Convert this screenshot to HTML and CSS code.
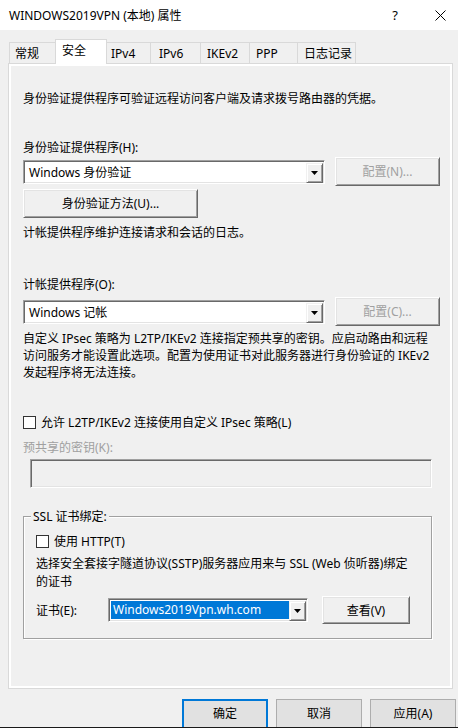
FILE: index.html
```html
<!DOCTYPE html>
<html lang="zh-CN">
<head>
<meta charset="utf-8">
<title>WINDOWS2019VPN (本地) 属性</title>
<link rel="stylesheet" href="styles.css">
</head>
<body>
<div class="titlebar">
  <span class="title">WINDOWS2019VPN (本地) 属性</span>
  <span class="help">?</span>
  <svg class="close" width="11" height="11" viewBox="0 0 11 11"><path d="M0.5 0.5L10.5 10.5M10.5 0.5L0.5 10.5" stroke="#000" stroke-width="1" fill="none"/></svg>
</div>
<div class="tabs">
  <div class="tab">常规</div>
  <div class="tab active">安全</div>
  <div class="tab">IPv4</div>
  <div class="tab">IPv6</div>
  <div class="tab">IKEv2</div>
  <div class="tab">PPP</div>
  <div class="tab">日志记录</div>
</div>
<div class="panel">
  <p class="intro">身份验证提供程序可验证远程访问客户端及请求拨号路由器的凭据。</p>
  <div class="label label-h">身份验证提供程序(H):</div>
  <div class="row row-h">
    <div class="combo combo-wide">
      <span class="combo-text">Windows 身份验证</span>
      <span class="combo-btn"><svg width="7" height="4" viewBox="0 0 7 4"><path d="M0 0H7L3.5 4Z" fill="#000"/></svg></span>
    </div>
    <div class="btn3d btn-config disabled">配置(N)...</div>
  </div>
  <div class="btn3d btn-method">身份验证方法(U)...</div>
  <p class="note">计帐提供程序维护连接请求和会话的日志。</p>
  <div class="label label-o">计帐提供程序(O):</div>
  <div class="row row-o">
    <div class="combo combo-wide">
      <span class="combo-text">Windows 记帐</span>
      <span class="combo-btn"><svg width="7" height="4" viewBox="0 0 7 4"><path d="M0 0H7L3.5 4Z" fill="#000"/></svg></span>
    </div>
    <div class="btn3d btn-config disabled">配置(C)...</div>
  </div>
  <p class="para">自定义 IPsec 策略为 L2TP/IKEv2 连接指定预共享的密钥。应启动路由和远程访问服务才能设置此选项。配置为使用证书对此服务器进行身份验证的 IKEv2 发起程序将无法连接。</p>
  <div class="check-row check-ipsec"><span class="cb"></span>允许 L2TP/IKEv2 连接使用自定义 IPsec 策略(L)</div>
  <div class="disabled-label">预共享的密钥(K):</div>
  <div class="textbox"></div>
  <div class="group">
    <div class="group-title">SSL 证书绑定:</div>
    <div class="check-row check-http"><span class="cb"></span>使用 HTTP(T)</div>
    <p class="group-text">选择安全套接字隧道协议(SSTP)服务器应用来与 SSL (Web 侦听器)绑定的证书</p>
    <div class="cert-row">
      <span class="cert-label">证书(E):</span>
      <div class="combo combo-cert">
        <span class="combo-text selected">Windows2019Vpn.wh.com</span>
        <span class="combo-btn"><svg width="7" height="4" viewBox="0 0 7 4"><path d="M0 0H7L3.5 4Z" fill="#000"/></svg></span>
      </div>
      <div class="btn3d btn-view">查看(V)</div>
    </div>
  </div>
</div>
<div class="footer">
  <div class="dlg-btn default">确定</div>
  <div class="dlg-btn">取消</div>
  <div class="dlg-btn">应用(A)</div>
</div>
</body>
</html>
```
FILE: styles.css
```css
* { box-sizing: border-box; }
html, body { margin: 0; padding: 0; }
body {
  width: 458px;
  height: 728px;
  overflow: hidden;
  background: #f0f0f0;
  font-family: "Noto Sans", "Noto Sans CJK SC", sans-serif;
  font-size: 12px;
  line-height: 17px;
  color: #000;
}
p { margin: 0; }

/* title bar */
.titlebar {
  height: 30px;
  background: #fff;
  display: flex;
  align-items: center;
  padding-left: 9px;
}
.title { flex: 1; white-space: nowrap; }
.help { font-size: 13px; margin-right: 37px; }
.close { display: block; margin-right: 12px; }

/* tabs */
.tabs {
  display: flex;
  align-items: flex-end;
  height: 33px;
  padding: 9px 0 0 9px;
}
.tab {
  height: 21px;
  border: 1px solid #d9d9d9;
  border-bottom: 0;
  background: #f0f0f0;
  margin-left: -1px;
  display: flex;
  align-items: center;
  white-space: nowrap;
}
.tab:nth-child(1) { margin-left: 0; width: 47px; padding-left: 5px; }
.tab:nth-child(2) { width: 52px; padding-left: 6px; }
.tab:nth-child(3) { width: 45px; padding-left: 4px; }
.tab:nth-child(4) { width: 51px; padding-left: 8px; }
.tab:nth-child(5) { width: 50px; padding-left: 6px; }
.tab:nth-child(6) { width: 49px; padding-left: 6px; }
.tab:nth-child(7) { width: 59px; padding-left: 6px; }
.tab.active {
  height: 25px;
  background: #fff;
  margin-bottom: -1px;
  padding-bottom: 3px;
  position: relative;
  z-index: 1;
}

/* panel */
.panel {
  margin-left: 8px;
  width: 445px;
  height: 626px;
  border: 1px solid #d9d9d9;
  box-shadow: inset 0 0 0 2px #fff;
  padding: 26px 0 0 14px;
}
.label-h { margin-top: 32px; }
.row { display: flex; align-items: center; height: 29px; }
.row-h { margin-top: 1px; }
.label-o { margin-top: 35px; }
.row-o { margin-top: 4px; }

.combo {
  display: flex;
  height: 24px;
  padding: 1px;
  border: 1px solid;
  border-color: #a0a0a0 #fff #fff #a0a0a0;
  box-shadow: inset 1px 1px 0 #696969, inset -1px -1px 0 #e3e3e3;
  background: #fff;
}
.combo-wide { width: 302px; }
.combo-text {
  flex: 1;
  padding-left: 3px;
  line-height: 20px;
  margin: 1px 0 0 1px;
  white-space: nowrap;
  overflow: hidden;
}
.combo-text.selected {
  background: #0078d7;
  color: #fff;
  padding-left: 2px;
  margin: 1px 0 1px 1px;
  line-height: 18px;
}
.combo-btn {
  width: 17px;
  height: 20px;
  margin-top: 1px;
  background: #f0f0f0;
  border: 1px solid;
  border-color: #f0f0f0 #696969 #696969 #f0f0f0;
  box-shadow: inset 1px 1px 0 #fff, inset -1px -1px 0 #a0a0a0;
  display: flex;
  align-items: center;
  justify-content: center;
}
.combo-btn svg { display: block; }

.btn3d {
  height: 29px;
  background: #f0f0f0;
  border: 1px solid;
  border-color: #fff #696969 #696969 #fff;
  box-shadow: inset 1px 1px 0 #e3e3e3, inset -1px -1px 0 #a0a0a0;
  display: flex;
  align-items: center;
  justify-content: center;
  white-space: nowrap;
}
.btn3d.disabled { color: #a0a0a0; }
.btn-config { width: 105px; margin-left: 10px; }
.btn-method { width: 175px; margin-top: 3px; }

.note { margin-top: 6px; }
.para { margin-top: 4px; width: 410px; }

.check-row { display: flex; align-items: center; height: 17px; white-space: nowrap; }
.cb {
  width: 13px;
  height: 13px;
  border: 1px solid #333;
  background: #fff;
  margin-right: 5px;
}
.check-ipsec { margin-top: 33px; }
.disabled-label { margin-top: 8px; color: #a0a0a0; }
.textbox {
  margin: 3px 0 0 7px;
  width: 402px;
  height: 29px;
  border: 1px solid;
  border-color: #a0a0a0 #fff #fff #a0a0a0;
  box-shadow: inset 1px 1px 0 #696969, inset -1px -1px 0 #e3e3e3;
  background: #f0f0f0;
}

/* group box */
.group {
  margin-top: 28px;
  width: 409px;
  height: 123px;
  border: 1px solid #a0a0a0;
  box-shadow: inset 1px 1px 0 #fff, 1px 1px 0 #fff;
  padding: 0 0 0 12px;
}
.group-title {
  width: fit-content;
  margin: -9px 0 0 -5px;
  padding: 0 2px;
  background: #f0f0f0;
}
.check-http { margin-top: 8px; }
.group-text { margin-top: 5px; line-height: 18px; width: 380px; }
.cert-row { display: flex; align-items: center; height: 28px; margin-top: 5px; }
.cert-label { width: 72px; }
.combo-cert { width: 200px; }
.btn-view { width: 88px; height: 28px; margin-left: 14px; }

/* footer */
.footer {
  margin-top: 10px;
  height: 29px;
  display: flex;
  justify-content: flex-end;
  align-items: flex-start;
  gap: 8px;
  padding-right: 2px;
  border-bottom: 1px solid #1a1a1a;
}
.dlg-btn {
  width: 86px;
  height: 28px;
  background: #e1e1e1;
  border: 1px solid #adadad;
  border-bottom: 0;
  display: flex;
  align-items: center;
  justify-content: center;
  padding-bottom: 1px;
}
.dlg-btn.default { border: 2px solid #0078d7; border-bottom: 0; }
```
